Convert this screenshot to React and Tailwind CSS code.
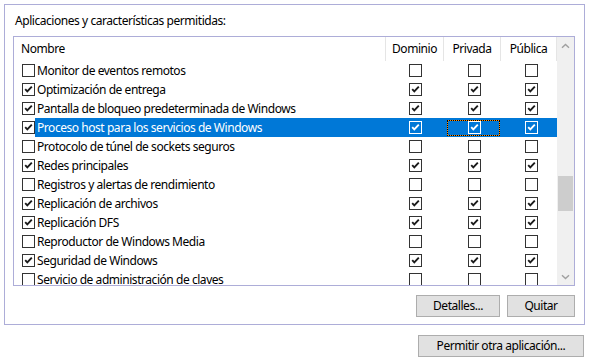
import React from "react";

const rows = [
  ["Monitor de eventos remotos", false],
  ["Optimización de entrega", true],
  ["Pantalla de bloqueo predeterminada de Windows", true],
  ["Proceso host para los servicios de Windows", true, true],
  ["Protocolo de túnel de sockets seguros", false],
  ["Redes principales", true],
  ["Registros y alertas de rendimiento", false],
  ["Replicación de archivos", true],
  ["Replicación DFS", true],
  ["Reproductor de Windows Media", false],
  ["Seguridad de Windows", true],
  ["Servicio de administración de claves", false],
];

function Box({ checked, inverted }) {
  const border = inverted ? "border-white" : "border-[#333333]";
  const bg = inverted ? "bg-transparent" : "bg-white";
  const stroke = inverted ? "#ffffff" : "#1a1a1a";
  return (
    <div className={`w-[13px] h-[13px] border ${border} ${bg} flex items-center justify-center shrink-0`}>
      {checked && (
        <svg width="11" height="11" viewBox="0 0 11 11">
          <path d="M2.2 5.2 L4.3 7.4 L8.8 2.6" fill="none" stroke={stroke} strokeWidth="1.9" strokeLinecap="butt" strokeLinejoin="miter" />
        </svg>
      )}
    </div>
  );
}

function Row({ name, checked, selected }) {
  return (
    <div className="flex h-[19px] shrink-0">
      <div className="w-[371px] flex items-center shrink-0">
        <div className="w-[21px] pl-[8px] flex items-center shrink-0">
          <Box checked={checked} />
        </div>
        <div className={`flex-1 h-full flex items-center pl-[2px] ${selected ? "bg-[#0078d7] text-white" : ""}`}>
          <span className="whitespace-nowrap">{name}</span>
        </div>
      </div>
      <div className={`flex flex-1 ${selected ? "bg-[#0078d7]" : ""}`}>
        <div className="w-[58px] flex items-center pl-[24px] shrink-0">
          <Box checked={checked} inverted={selected} />
        </div>
        <div className="w-[57px] flex items-center pl-[4px] shrink-0">
          {selected ? (
            <div className="w-[53px] h-[16px] border border-dotted border-black bg-[#ff8c00]">
              <div className="w-full h-full bg-[#0078d7] flex items-center pl-[20px]">
                <Box checked={checked} inverted />
              </div>
            </div>
          ) : (
            <div className="pl-[21px] flex items-center">
              <Box checked={checked} />
            </div>
          )}
        </div>
        <div className="w-[57px] flex items-center pl-[25px] shrink-0">
          <Box checked={checked} inverted={selected} />
        </div>
      </div>
    </div>
  );
}

function Chevron({ down }) {
  return (
    <svg width="9" height="6" viewBox="0 0 9 6">
      <path d={down ? "M1 1.2 L4.5 4.6 L8 1.2" : "M1 4.8 L4.5 1.4 L8 4.8"} fill="none" stroke="#a0a0a0" strokeWidth="1.4" />
    </svg>
  );
}

export default function App() {
  return (
    <div
      className="w-[590px] h-[361px] bg-white text-black text-[12px] tracking-[-0.45px] leading-[16px] pt-[4px] pl-[4px] overflow-hidden"
      style={{ fontFamily: '"Noto Sans", "Open Sans", sans-serif' }}
    >
      <div className="w-[581px] h-[321px] border border-[#adadd8] flex flex-col pl-[8px] pr-[9px]">
        <div className="pt-[8px] pl-[2px] h-[31px] shrink-0">Aplicaciones y características permitidas:</div>
        <div className="h-[250px] border border-[#adadd8] flex shrink-0 overflow-hidden">
          <div className="flex-1 flex flex-col overflow-hidden">
            <div className="flex h-[24px] shrink-0">
              <div className="w-[371px] pl-[7px] flex items-center shrink-0">Nombre</div>
              <div className="w-[58px] border-l border-[#e5e5e5] flex items-center justify-center shrink-0">Dominio</div>
              <div className="w-[57px] border-l border-[#e5e5e5] flex items-center justify-center shrink-0">Privada</div>
              <div className="w-[57px] border-l border-r border-[#e5e5e5] flex items-center justify-center shrink-0">Pública</div>
            </div>
            {rows.map(([n, c, s]) => (
              <Row key={n} name={n} checked={c} selected={s} />
            ))}
          </div>
          <div className="w-[17px] bg-[#f0f0f0] flex flex-col shrink-0">
            <div className="h-[17px] flex items-center justify-center shrink-0">
              <Chevron />
            </div>
            <div className="flex-1 flex flex-col pt-[122px]">
              <div className="h-[35px] bg-[#cdcdcd] mx-[1px]" />
            </div>
            <div className="h-[17px] flex items-center justify-center shrink-0">
              <Chevron down />
            </div>
          </div>
        </div>
        <div className="flex justify-end gap-[7px] mt-[9px]">
          <button className="w-[84px] h-[22px] bg-[#e1e1e1] border border-[#adadad] flex items-center justify-center">Detalles...</button>
          <button className="w-[68px] h-[22px] bg-[#e1e1e1] border border-[#adadad] flex items-center justify-center">Quitar</button>
        </div>
      </div>
      <div className="w-[580px] flex justify-end mt-[10px]">
        <button className="w-[166px] h-[22px] bg-[#e1e1e1] border border-[#adadad] flex items-center justify-center">Permitir otra aplicación...</button>
      </div>
    </div>
  );
}
